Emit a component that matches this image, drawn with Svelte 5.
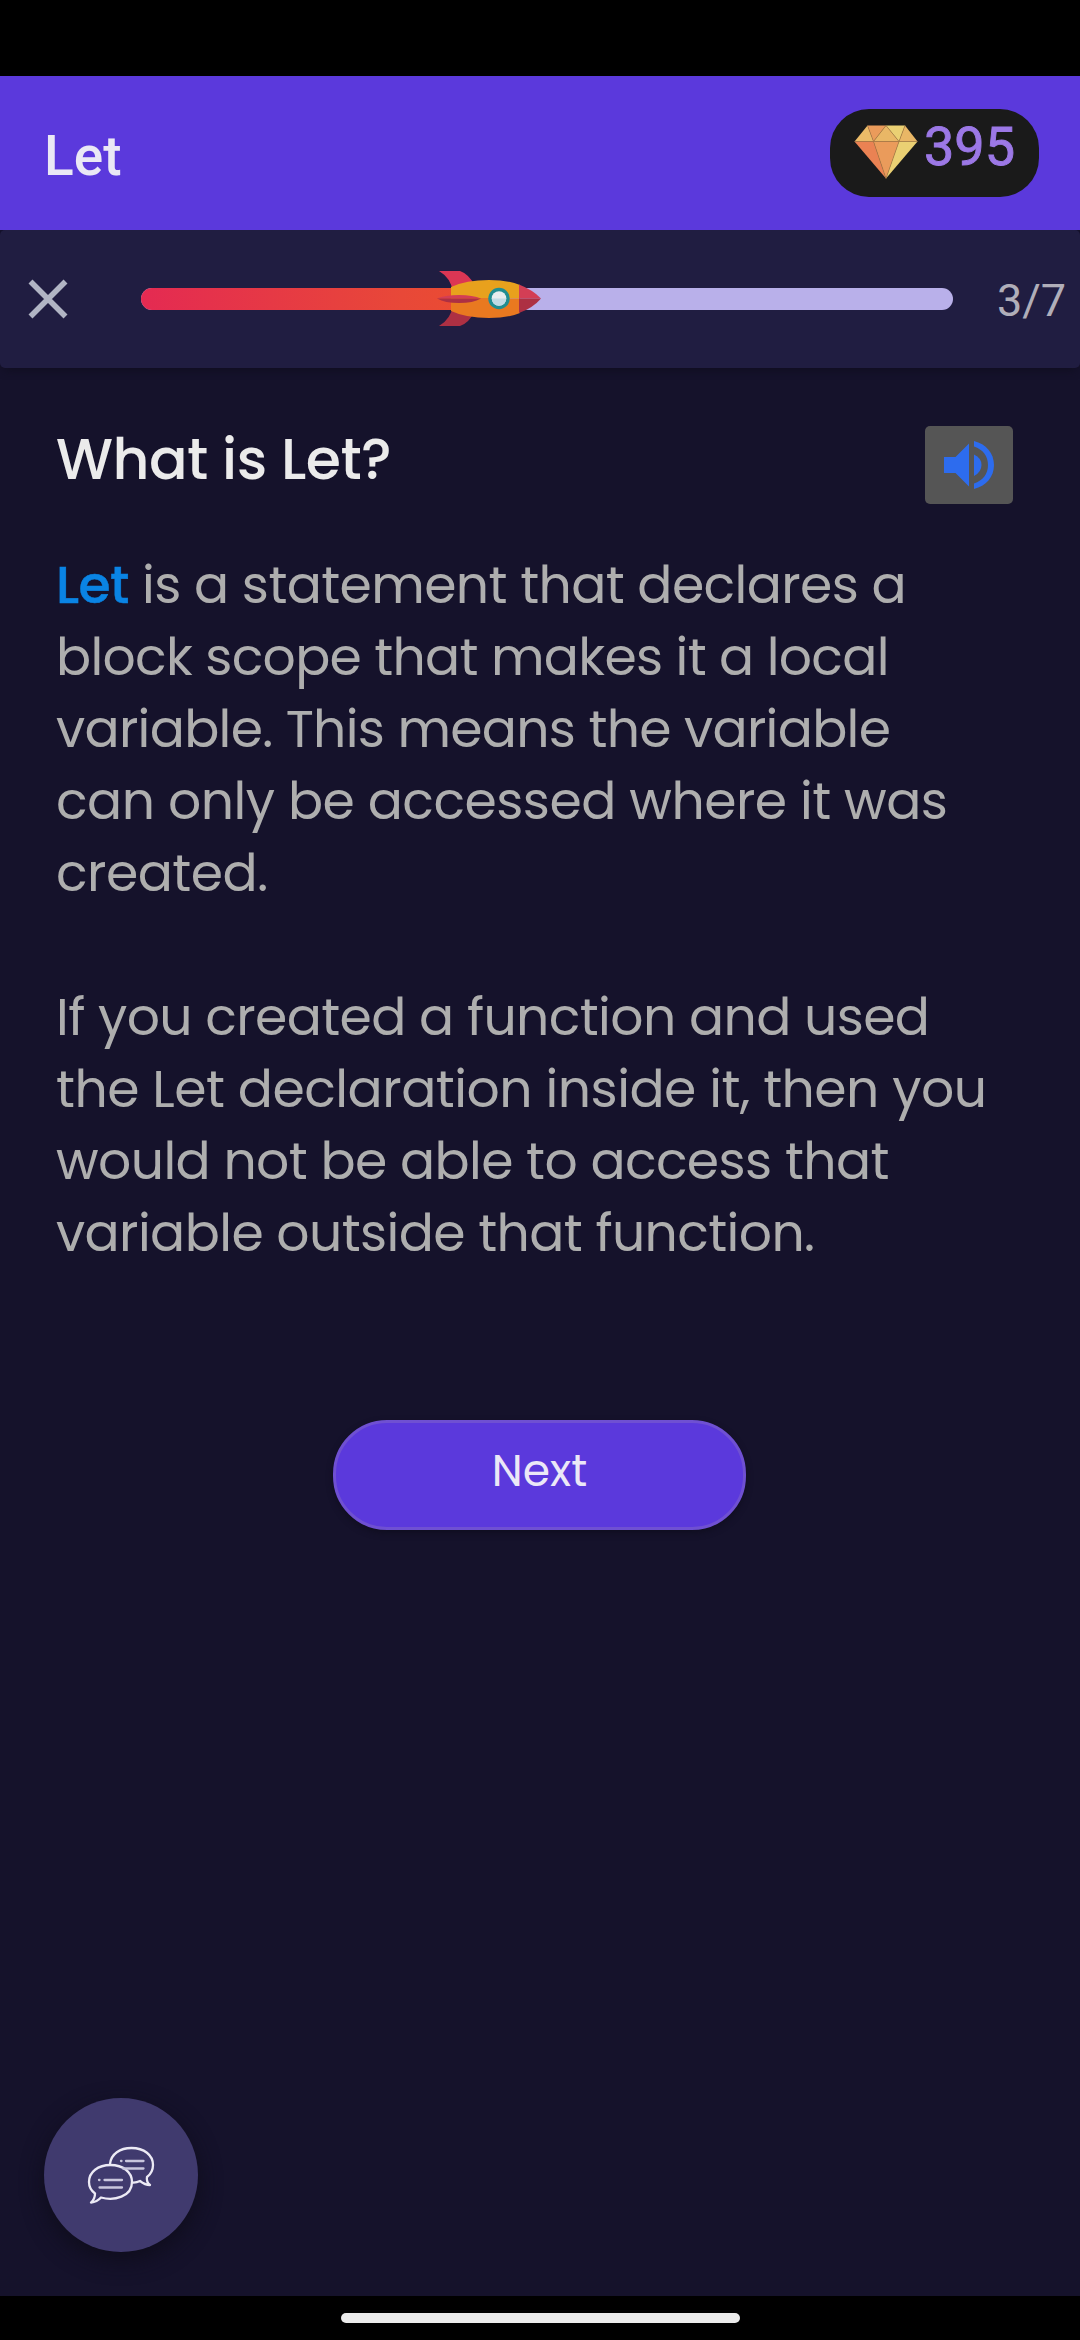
<script>
  const paragraphs = [
    [
      { lead: 'Let', text: 'is a statement that declares a' },
      { text: 'block scope that makes it a local', fit: 'snug' },
      { text: 'variable. This means the variable', fit: 'snug' },
      { text: 'can only be accessed where it was', fit: 'open' },
      { text: 'created.', fit: 'open' }
    ],
    [
      { text: 'If you created a function and used' },
      { text: 'the Let declaration inside it, then you', fit: 'open' },
      { text: 'would not be able to access that' },
      { text: 'variable outside that function.' }
    ]
  ];
</script>

<div class="screen">
  <div class="status"></div>
  <header>
    <h1>Let</h1>
    <div class="badge">
      <svg class="gem" viewBox="0 0 64 54" width="64" height="54">
        <path d="M13.500.5 0.500 16.500H19.500z" fill="#ebbb68" />
        <path d="M13.500.5H32L19.500 16.500z" fill="#ea9b5b" />
        <path d="M32 .5 19.500 16.500H45z" fill="#e9b766" />
        <path d="M32 .5H51L45 16.500z" fill="#ead073" />
        <path d="M51 .5 63.500 16.500H45z" fill="#e9b766" />
        <path d="M.5 16.500H19.500L32 53.500z" fill="#ea8253" />
        <path d="M19.500 16.500H45L32 53.500z" fill="#ea9b5b" />
        <path d="M45 16.500H63.500L32 53.500z" fill="#ead073" />
        <path d="M.5 16.500H63.500M13.500.5 19.500 16.500 32 53.500 45 16.500 51 .5M19.500 16.500 32 .5 45 16.500" fill="none" stroke="#a87844" stroke-width=".6" />
      </svg>
      <span>395</span>
    </div>
  </header>

  <section class="progress">
    <svg class="close" viewBox="0 0 40 40" width="40" height="40">
      <path d="M2.500 2.500 37.500 37.500M37.500 2.500 2.500 37.500" stroke="#b1b5c4" stroke-width="5.600" />
    </svg>
    <div class="track">
      <div class="fill"></div>
      <svg class="rocket" viewBox="0 0 106 58" width="106" height="58">
        <path d="M2 1H23Q32 4 38 16L16 22Q14 8 2 1z" fill="#dc3654" />
        <path d="M2 56H23Q32 53 38 41L16 35Q14 49 2 56z" fill="#ad3043" />
        <path d="M14 28.500V17Q29 10 52 10Q71 10 83 15V28.500z" fill="#e8a11d" />
        <path d="M14 28.500V41Q29 48 52 48Q71 48 83 43V28.500z" fill="#e97920" />
        <path d="M82 14.500Q96 20 104 28.500H82z" fill="#d33e55" />
        <path d="M82 43Q96 38 104 28.500H82z" fill="#ad3043" />
        <path d="M0 28.500Q8 25 22 25Q36 25 44 28.500z" fill="#d33e55" />
        <path d="M0 28.500Q8 33 22 33Q36 33 44 28.500z" fill="#ad3043" />
        <circle cx="62" cy="28.500" r="10.700" fill="#208e92" />
        <circle cx="62" cy="28.500" r="7.300" fill="#e7edef" />
        <path d="M54.700 28.500a7.300 7.300 0 0 0 14.600 0z" fill="#c0dbe5" />
      </svg>
    </div>
    <span class="count">3/7</span>
  </section>

  <main>
    <div class="heading">
      <h2>What is Let?</h2>
      <button class="audio" aria-label="Listen">
        <svg viewBox="0 0 50 48" width="50" height="48">
          <path d="M0 16H11.500L25 2.500V45.500L11.500 32H0z" fill="#2d6cee" />
          <path d="M30 13.500Q37.500 17 37.500 24T30 35z" fill="#2d6cee" />
          <path d="M30 0C42 3 50 12 50 24S42 45 30 48V42.500C39 39.500 44 33 44 24S39 8.500 30 5.500z" fill="#2d6cee" />
        </svg>
      </button>
    </div>
    <div class="copy">
      {#each paragraphs as lines}
        <p>
          {#each lines as line}
            <span class="line" class:open={line.fit === 'open'} class:snug={line.fit === 'snug'}>{#if line.lead}<strong>{line.lead}</strong>{' '}{/if}{line.text}</span>
          {/each}
        </p>
      {/each}
    </div>
    <button class="next">Next</button>
  </main>

  <div class="dock">
    <button class="chat" aria-label="Chat">
      <svg viewBox="0 0 68 58" width="68" height="58" fill="none" stroke="#eceaf5" stroke-width="2.300" stroke-linejoin="round" stroke-linecap="round">
        <path d="M23 18C24 8 33 2 44.500 2C57 2 66 9 66 19C66 25 64 28 60 31Q59 36 63 39Q58 39 53 35Q49 37 45 36.500" />
        <path d="M23.500 19C11 19 2 26 2 36Q2 43 8 47.500Q8 53 4 56.500Q10 56 14 51.500C27 55 45 51 45 36C45 26 36 19 23.500 19z" />
        <path d="M34 15h.5M39 15H56.500M36 22.500H56.500M12 34h.5M17.500 34H35M12.500 41.500H35" stroke="#c9c6dd" />
      </svg>
    </button>
  </div>
  <footer><div class="handle"></div></footer>
</div>

<style>
  :global(body) { margin: 0; background: #15122b; }
  .screen {
    width: 1080px;
    height: 2340px;
    display: flex;
    flex-direction: column;
    overflow: hidden;
    background: #15122b;
    font-family: Poppins, Inter, sans-serif;
  }
  h1, h2, p { margin: 0; }
  button { padding: 0; border: 0; font: inherit; }
  span, strong, h1, h2 { white-space: nowrap; }
  .status { height: 76px; background: #000; }
  header {
    height: 154px;
    box-sizing: border-box;
    padding: 0 41px 0 44px;
    display: flex;
    align-items: center;
    justify-content: space-between;
    background: #5b39dc;
    font-family: Roboto, sans-serif;
  }
  h1 { font-size: 55px; line-height: 64px; font-weight: 500; color: #eae8f5; padding-top: 5px; }
  .badge {
    width: 209px;
    height: 88px;
    box-sizing: border-box;
    padding-left: 24px;
    border-radius: 39px;
    background: #1a1a1a;
    display: flex;
    align-items: flex-start;
    gap: 6px;
  }
  .gem { margin-top: 16px; }
  .badge span { margin-top: 8px; font-size: 54px; line-height: 60px; font-weight: 400; color: #9c78e6; -webkit-text-stroke: .9px #9c78e6; }
  .progress {
    height: 138px;
    box-sizing: border-box;
    padding: 0 12px 0 28px;
    display: flex;
    align-items: center;
    border-radius: 5px;
    background: #201d41;
    box-shadow: 0 6px 8px -4px #100e20;
  }
  .track {
    position: relative;
    width: 812px;
    height: 22px;
    margin-left: 73px;
    border-radius: 11px;
    background: #b9b0ea;
  }
  .fill {
    width: 348px;
    height: 22px;
    border-radius: 11px 0 0 11px;
    background: linear-gradient(90deg, #e42a52, #e84838 75%, #eb4d30);
  }
  .rocket { position: absolute; left: 296px; top: -18px; }
  .count { margin-left: 44px; padding-top: 3px; font: 400 45px/52px Roboto, sans-serif; color: #b0aeb9; }
  main { flex: 1; padding: 58px 67px 0 56px; }
  .heading { display: flex; justify-content: space-between; align-items: flex-start; }
  h2 { font-size: 57px; line-height: 66px; font-weight: 500; letter-spacing: -.5px; color: #ebebeb; }
  .audio {
    width: 88px;
    height: 78px;
    display: grid;
    place-items: center;
    border-radius: 5px;
    background: #555;
  }
  .copy { margin-top: 45px; display: flex; flex-direction: column; gap: 72px; }
  p { font-size: 52px; line-height: 72px; letter-spacing: -.6px; color: #aeaeae; }
  .line { display: block; height: 72px; }
  .open { letter-spacing: -.5px; }
  .snug { letter-spacing: -.7px; }
  strong { font-weight: 500; color: #0a84e4; -webkit-text-stroke: .5px #0a84e4; }
  .next {
    display: block;
    width: 413px;
    height: 110px;
    margin: 151px 0 0 277px;
    padding-bottom: 8px;
    box-sizing: border-box;
    border: 3px solid #6f50d2;
    border-radius: 54px;
    background: #5b39dc;
    color: #ebe8f7;
    font-size: 44px;
    line-height: 60px;
    box-shadow: 0 3px 6px #100e20;
  }
  .dock { padding: 0 44px 44px; }
  .chat {
    width: 154px;
    height: 154px;
    display: grid;
    place-items: center;
    border-radius: 50%;
    background: #403a6e;
    box-shadow: 0 8px 22px #0f0d1c;
  }
  footer { height: 44px; display: flex; justify-content: center; background: #000; }
  .handle { width: 399px; height: 10px; margin-top: 17px; border-radius: 5px; background: #ebebeb; }
</style>
